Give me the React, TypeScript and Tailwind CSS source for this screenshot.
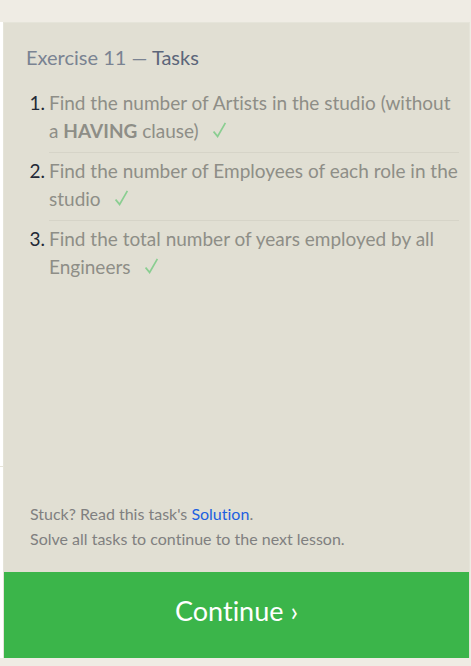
import React from "react";

function Check() {
  return (
    <svg className="ml-3.5 inline-block align-baseline" width="13" height="16" viewBox="0 0 13 16" fill="none" role="img" aria-label="Completed">
      <path d="M0.6 9.6L4.6 14.4L12.4 0.8" stroke="#8ace91" strokeWidth="1.7" />
    </svg>
  );
}

const tasks: { id: number; body: React.ReactNode }[] = [
  {
    id: 1,
    body: (
      <>
        Find the number of Artists in the studio (without a <strong className="font-bold">HAVING</strong> clause)
      </>
    ),
  },
  { id: 2, body: "Find the number of Employees of each role in the studio" },
  { id: 3, body: "Find the total number of years employed by all Engineers" },
];

export default function App() {
  return (
    <div className="flex min-h-screen flex-col bg-[#efece4] pt-[22px] pb-2 font-[Lato,sans-serif] [font-variant-ligatures:none]">
      <main className="flex flex-1 pr-px">
        <div className="flex w-[3px] flex-col bg-white">
          <div className="flex-1" />
          <div className="h-48 border-t border-[#e6e4da]" />
        </div>
        <section className="flex flex-1 flex-col border border-b-0 border-[#e5e4d9] bg-[#e1dfd3]">
          <h1 className="px-[22px] pt-[18px] text-[20px] leading-8 text-[#7a8392]">
            Exercise 11 — <span className="text-[#5c667a]">Tasks</span>
          </h1>
          <ol className="mt-4 flex flex-col gap-1 pr-[10px] pl-[26px] text-[19px] leading-7">
            {tasks.map((task) => (
              <li key={task.id} className="group flex gap-1">
                <span className="flex w-[15px] shrink-0 justify-end text-[#222936]">{task.id}.</span>
                <div className="flex-1 border-b border-[#d6d4c8] pb-[7px] text-[#8e8e87] group-last:border-0">
                  {task.body}
                  <Check />
                </div>
              </li>
            ))}
          </ol>
          <div className="mt-auto px-[26px] pb-[21px] text-[16px] leading-[25px] text-[#808080]">
            <p>
              Stuck? Read this task's <a href="#solution" className="text-[#1d5fe0]">Solution</a>.
            </p>
            <p>Solve all tasks to continue to the next lesson.</p>
          </div>
          <button type="button" className="h-[86px] bg-[#3bb54a] pb-2 text-[27px] text-white">
            Continue ›
          </button>
        </section>
      </main>
    </div>
  );
}
